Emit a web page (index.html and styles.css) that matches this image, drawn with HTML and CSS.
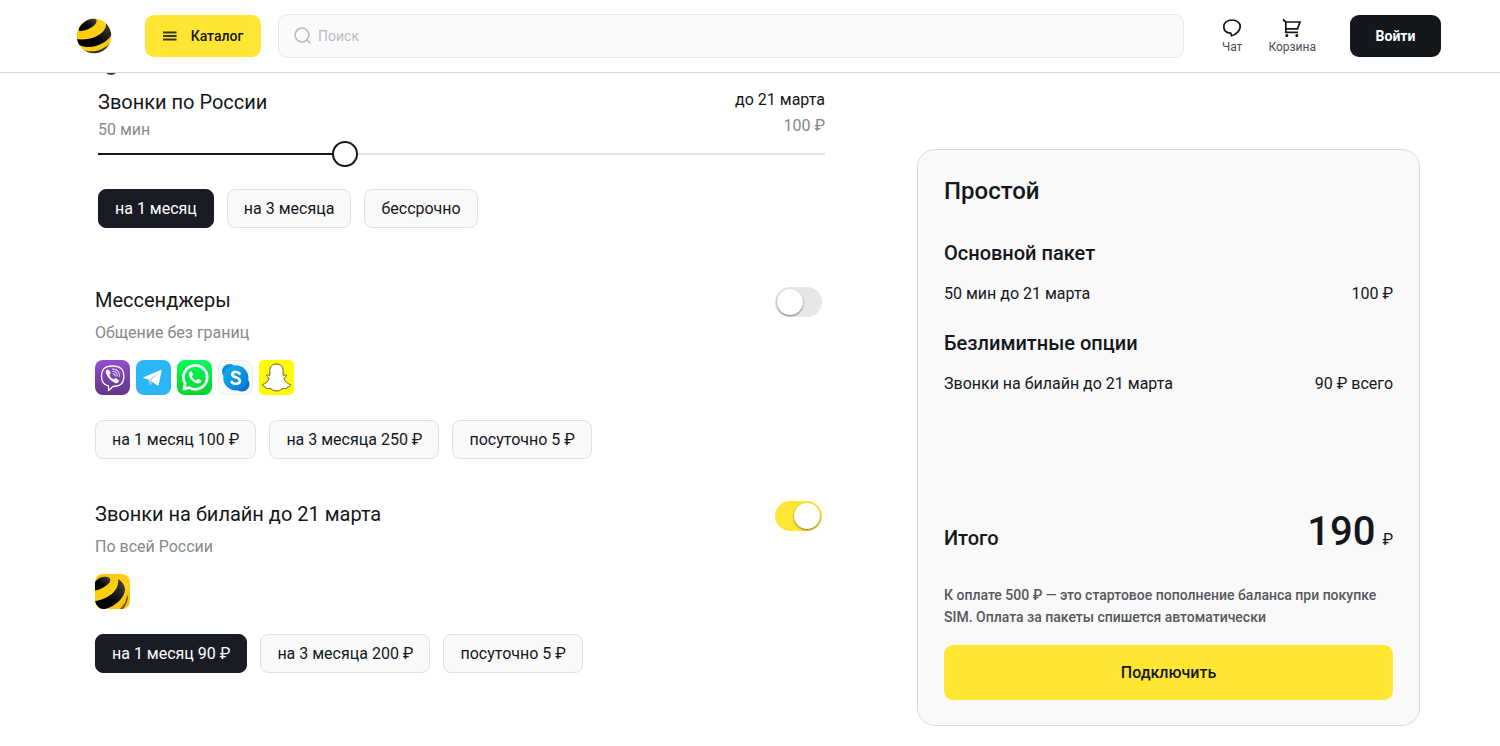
FILE: index.html
```html
<!DOCTYPE html>
<html lang="ru">
<head>
<meta charset="utf-8">
<meta name="viewport" content="width=device-width, initial-scale=1">
<title>Простой</title>
<link rel="stylesheet" href="styles.css">
</head>
<body>
<svg class="defs" width="0" height="0" aria-hidden="true">
  <defs>
    <linearGradient id="gold" x1="0" y1="0" x2="1" y2="1"><stop offset="0" stop-color="#ffc400"/><stop offset="0.6" stop-color="#ffd21a"/><stop offset="1" stop-color="#f5b800"/></linearGradient>
    <linearGradient id="ink" x1="0" y1="1" x2="1" y2="0"><stop offset="0.4" stop-color="#000"/><stop offset="1" stop-color="#4a4a4c"/></linearGradient>
    <linearGradient id="violet" x1="0" y1="0" x2="0" y2="1"><stop offset="0" stop-color="#9150cc"/><stop offset="1" stop-color="#633488"/></linearGradient>
    <linearGradient id="green" x1="0" y1="0" x2="0" y2="1"><stop offset="0" stop-color="#04fb5c"/><stop offset="1" stop-color="#02d52c"/></linearGradient>
    <linearGradient id="azure" x1="0" y1="0" x2="1" y2="1"><stop offset="0" stop-color="#12b4f2"/><stop offset="1" stop-color="#0278d4"/></linearGradient>
    <clipPath id="ball"><circle cx="18" cy="18" r="17.3"/></clipPath>
    <clipPath id="tile"><rect width="35" height="35" rx="8"/></clipPath>
  </defs>
</svg>

<header class="header">
  <a class="logo" href="#" aria-label="билайн">
    <svg width="36" height="36" viewBox="0 0 36 36" aria-hidden="true">
      <g clip-path="url(#ball)">
        <rect width="36" height="36" fill="url(#gold)"/>
        <path d="M3 10C6 5 12 0 18 0C21.500 1 21.500 4.500 18 7.500C14 11 8 13.200 3 13Z" fill="url(#ink)"/>
        <path d="M0 21C10 22.500 20 20 26 14.500C30 10.500 31 7 29 3L36 10V16C32 23.500 22 29 13 29C7 29 2 27 0 24Z" fill="url(#ink)"/>
        <path d="M5 31.500C16 35.500 28 33 36 23V26C31 34 20 38 10 36Z" fill="#39352c"/>
      </g>
    </svg>
  </a>
  <button class="catalog" type="button">
    <svg width="14" height="10" viewBox="0 0 14 10" aria-hidden="true"><path d="M0 1.500H13.500M0 5H13.500M0 8.500H13.500" stroke="#3c3a20" stroke-width="1.900"/></svg>
    Каталог
  </button>
  <label class="search">
    <svg width="18" height="18" viewBox="0 0 18 18" fill="none" stroke="#b9bac6" stroke-width="1.500" aria-hidden="true"><circle cx="8" cy="8" r="6.900"/><path d="M13 13L16.500 16.500"/></svg>
    <input type="search" placeholder="Поиск" aria-label="Поиск">
  </label>
  <nav class="links">
    <a class="link" href="#">
      <svg width="20" height="20" viewBox="0 0 20 20" fill="none" stroke="#14171b" stroke-width="1.700" stroke-linejoin="round" aria-hidden="true"><path d="M8.800 15.200C4.500 15 1.800 12.500 1.800 8.800C1.800 4.800 5 2 10 2C15 2 18.200 4.800 18.200 8.500C18.200 12.500 14.500 16.500 9.500 17.800Z"/></svg>
      Чат
    </a>
    <a class="link" href="#">
      <svg width="20" height="20" viewBox="0 0 20 20" fill="none" stroke="#14171b" stroke-width="1.700" aria-hidden="true"><path d="M1 1.500L3.800 4V14.400H16M3.800 4H18L15.500 10.900H3.800"/><circle cx="4.800" cy="17.500" r="1.500" fill="#14171b" stroke="none"/><circle cx="14.800" cy="17.500" r="1.500" fill="#14171b" stroke="none"/></svg>
      Корзина
    </a>
  </nav>
  <button class="login" type="button">Войти</button>
</header>

<main class="page">
  <div class="options">
    <div class="peek" aria-hidden="true"><span></span></div>

    <section class="calls">
      <div class="row">
        <div>
          <h2 class="title"><label for="minutes">Звонки по России</label></h2>
          <p class="hint">50 мин</p>
        </div>
        <div class="until">
          <p>до 21 марта</p>
          <p class="hint">100 ₽</p>
        </div>
      </div>
      <input class="slider" id="minutes" type="range" min="0" max="150" value="50">
      <div class="chips">
        <button class="chip active" type="button">на 1 месяц</button>
        <button class="chip" type="button">на 3 месяца</button>
        <button class="chip" type="button">бессрочно</button>
      </div>
    </section>

    <section class="option">
      <div class="row">
        <div>
          <h2 class="title"><label for="messengers">Мессенджеры</label></h2>
          <p class="hint">Общение без границ</p>
        </div>
        <input class="toggle" id="messengers" type="checkbox" role="switch">
      </div>
      <div class="apps">
        <svg width="35" height="35" viewBox="0 0 35 35" role="img" aria-label="Viber">
          <rect width="35" height="35" rx="8" fill="url(#violet)"/>
          <path d="M17.500 6C24.500 6 28.800 8.500 28.800 16.500C28.800 24 25 26.500 18 26.500L13.500 30.500V26C8.500 25 6.500 22 6.500 16.500C6.500 8.500 10.500 6 17.500 6Z" fill="none" stroke="#fff" stroke-width="1.300" stroke-linejoin="round"/>
          <path d="M12.500 9.500C10.800 10.300 10.500 11.800 11 13C12.800 18 16 21.500 20.800 23.200C22.500 23.600 23.800 22 24 20.800C24 20.200 21.500 18.300 20.700 18C20 17.900 19.300 19.500 18.500 19.200C16.500 18.500 14.900 16.800 14.400 14.800C14.400 14.200 15.800 13.500 15.600 12.700C15.200 11.500 13.500 9.400 12.500 9.500Z" fill="#fff"/>
          <path d="M17.500 9.200C22 9 24.800 12 24.500 16.500M17.800 11.500C20.800 11.500 22.300 13.500 22.300 16.100M18 13.800C19.500 13.900 20.200 14.800 20.200 15.900" fill="none" stroke="#d9c3ec" stroke-width="1.200" stroke-linecap="round"/>
        </svg>
        <svg width="35" height="35" viewBox="0 0 35 35" role="img" aria-label="Telegram">
          <rect width="35" height="35" rx="8" fill="#29b6f6"/>
          <path d="M7.500 17.200L24.700 10.100C25.300 9.900 25.600 10.300 25.500 10.900L22.800 24.600C22.600 25.500 22 25.700 21.200 25.200L12.500 19.600L8 18.200C7.200 17.900 7 17.500 7.500 17.200Z" fill="#fff"/>
          <path d="M12.500 19.600L22.500 12.900L15 20.600L13.900 25.500Z" fill="#c9d4dc"/><path d="M15 20.600L17.500 22.500L13.900 25.500Z" fill="#a9bdca"/>
        </svg>
        <svg width="35" height="35" viewBox="0 0 35 35" role="img" aria-label="WhatsApp">
          <rect width="35" height="35" rx="8" fill="url(#green)"/>
          <path d="M6.800 29L8.200 23.600A11.900 11.900 0 1 1 12.300 27.600Z" fill="none" stroke="#fff" stroke-width="2.700" stroke-linejoin="round"/>
          <path d="M13.500 11.500C12 12.300 11.400 14 12.100 15.700C13.700 19.600 16.200 22.100 20.500 23.400C22.500 23.800 24.300 22.500 24.400 20.700C24.300 20.100 22 19 21.200 18.700C20.400 18.600 19.900 20.300 19.100 20.200C17.200 19.500 15.700 18.100 14.900 16.400C15 15.800 16.200 15.200 16 14.400C15.600 13 15 11.500 14.500 11.400Z" fill="#fff"/>
        </svg>
        <svg width="35" height="35" viewBox="0 0 35 35" role="img" aria-label="Skype">
          <rect x="0.500" y="0.500" width="34" height="34" rx="8" fill="#f9f9f9" stroke="#eeeeee"/>
          <circle cx="11.500" cy="11.500" r="7.500" fill="#0c8fe0"/><circle cx="24" cy="24" r="7.500" fill="#0570c6"/><circle cx="17.800" cy="17.800" r="12.600" fill="url(#azure)"/>
          <path d="M21.600 13.600C20.800 11.800 14.300 10.800 14.300 14.400C14.300 18 21.800 16.600 21.800 20.700C21.800 25 14.700 24.300 13.800 21.900" fill="none" stroke="#fff" stroke-width="2.700" stroke-linecap="round"/>
        </svg>
        <svg width="35" height="35" viewBox="0 0 35 35" role="img" aria-label="Snapchat">
          <rect width="35" height="35" rx="5" fill="#fffc00"/>
          <path d="M17.500 4C21.600 4 24.100 6.800 24.100 10.500V15.300C25 15.600 26.500 14.400 27.400 15.200C28.400 16.600 25 17.300 25 18.500C25.800 21.500 28.500 23.800 31.300 24.500C32.300 25.500 30.500 26.500 28.500 26.900C28.100 27.400 28.300 28.500 27.500 28.600C25.800 28.700 24.600 28 23 28.900C21 30.200 19.700 31 17.500 31C15.300 31 14 30.200 12 28.900C10.400 28 9.200 28.700 7.500 28.600C6.700 28.500 6.900 27.400 6.500 26.900C4.500 26.500 2.700 25.500 3.700 24.500C6.500 23.800 9.200 21.500 10 18.500C10 17.300 6.600 16.600 7.600 15.200C8.500 14.400 10 15.600 10.900 15.300V10.500C10.900 6.800 13.400 4 17.500 4Z" fill="#fff" stroke="#4a4a3a" stroke-width="0.900"/>
        </svg>
      </div>
      <div class="chips">
        <button class="chip" type="button">на 1 месяц 100 ₽</button>
        <button class="chip" type="button">на 3 месяца 250 ₽</button>
        <button class="chip" type="button">посуточно 5 ₽</button>
      </div>
    </section>

    <section class="option">
      <div class="row">
        <div>
          <h2 class="title"><label for="beeline">Звонки на билайн до 21 марта</label></h2>
          <p class="hint">По всей России</p>
        </div>
        <input class="toggle" id="beeline" type="checkbox" role="switch" checked>
      </div>
      <div class="apps">
        <svg width="35" height="35" viewBox="0 0 35 35" role="img" aria-label="билайн">
          <g clip-path="url(#tile)">
            <rect width="35" height="35" fill="url(#gold)"/>
            <path d="M0 8C4 3 8 2.500 12 3C17 4 16 8 12 11C8 14 4 16 0 16.500Z" fill="url(#ink)"/>
            <path d="M0 27C12 25.500 25 17 23 5C28 8 30 12 30 16C29 24 21 32 10 35H6C3 33 1 31 0 27Z" fill="url(#ink)"/>
            <path d="M25 35C29 31 32 27 32 20L33 24C32 29 30 32 28 35Z" fill="#665019"/>
          </g>
        </svg>
      </div>
      <div class="chips">
        <button class="chip active" type="button">на 1 месяц 90 ₽</button>
        <button class="chip" type="button">на 3 месяца 200 ₽</button>
        <button class="chip" type="button">посуточно 5 ₽</button>
      </div>
    </section>
  </div>

  <aside class="card">
    <h1 class="plan">Простой</h1>
    <h2 class="group">Основной пакет</h2>
    <div class="line"><span>50 мин до 21 марта</span><span>100 ₽</span></div>
    <h2 class="group">Безлимитные опции</h2>
    <div class="line"><span>Звонки на билайн до 21 марта</span><span>90 ₽ всего</span></div>
    <div class="total"><span class="total-label">Итого</span><span class="price"><strong class="sum">190</strong> ₽</span></div>
    <p class="note">К оплате 500 ₽ — это стартовое пополнение баланса при покупке SIM. Оплата за пакеты спишется автоматически</p>
    <button class="connect" type="button">Подключить</button>
  </aside>
</main>
</body>
</html>
```
FILE: styles.css
```css
* { box-sizing: border-box; }

body {
  margin: 0;
  background: #fff;
  color: #14171b;
  font: 16px/24px Roboto, "Liberation Sans", sans-serif;
}

h1, h2, p { margin: 0; font-weight: 400; }
button, input { font: inherit; color: inherit; }
button { border: 0; cursor: pointer; }
svg { display: block; flex: none; }
.defs { position: absolute; }

.header {
  display: flex;
  align-items: center;
  height: 73px;
  padding: 0 59px 0 76px;
  border-bottom: 1px solid #d8d9de;
}
.logo { margin-right: 33px; }
.catalog {
  display: flex;
  align-items: center;
  justify-content: center;
  gap: 14px;
  width: 116px;
  height: 42px;
  margin-right: 17px;
  border-radius: 9px;
  background: #ffe632;
  font-size: 14px;
  font-weight: 500;
}
.search {
  display: flex;
  flex: 1;
  align-items: center;
  gap: 6px;
  height: 44px;
  padding: 0 15px;
  border: 1px solid #e8e8ea;
  border-radius: 9px;
  background: #fafafa;
}
.search input {
  flex: 1;
  min-width: 0;
  padding: 0;
  border: 0;
  outline: 0;
  background: transparent;
  font-size: 14px;
}
.search input::placeholder { color: #b9bac6; }
.links {
  display: flex;
  gap: 26px;
  margin: 0 34px 0 38px;
}
.link {
  display: flex;
  flex-direction: column;
  align-items: center;
  gap: 2px;
  color: #4a4d57;
  font-size: 12px;
  line-height: 14px;
  text-decoration: none;
}
.login {
  width: 91px;
  height: 42px;
  border-radius: 9px;
  background: #14171b;
  color: #fff;
  font-size: 14px;
  font-weight: 700;
}

.page {
  display: grid;
  grid-template-columns: 730fr 503fr;
  align-items: start;
  column-gap: 92px;
  padding: 0 80px 0 95px;
}

.peek {
  display: flex;
  align-items: flex-end;
  height: 2px;
  margin-left: 9px;
  overflow: hidden;
}
.peek span {
  flex: none;
  width: 14px;
  height: 14px;
  border: 2px solid #3a3c40;
  border-radius: 50%;
}

.row {
  display: flex;
  justify-content: space-between;
}
.title {
  font-size: 20px;
  line-height: 28px;
}
.hint { color: #86888c; }
.chips {
  display: flex;
  flex-wrap: wrap;
  gap: 13px;
}
.chip {
  height: 39px;
  padding: 1px 16px 0;
  border: 1px solid #e0e1e5;
  border-radius: 8px;
  background: #f9f9f9;
}
.chip.active {
  border-color: #191c24;
  background: #191c24;
  color: #fff;
}

.calls { padding: 13px 0 0 3px; }
.calls .hint { line-height: 28px; }
.until { text-align: right; }
.slider {
  display: block;
  width: 100%;
  height: 26px;
  margin: -3px 0 22px;
  appearance: none;
  background: linear-gradient(to right, #14171b 33%, #e3e3e3 33%) center / 100% 2px no-repeat;
}
.slider::-webkit-slider-thumb {
  width: 26px;
  height: 26px;
  appearance: none;
  border: 2px solid #14171b;
  border-radius: 50%;
  background: #fff;
}
.slider::-moz-range-thumb {
  width: 22px;
  height: 22px;
  border: 2px solid #14171b;
  border-radius: 50%;
  background: #fff;
}

.option { padding: 0 3px 0 0; }
.calls + .option { margin-top: 58px; }
.option + .option { margin-top: 41px; }
.option .hint { padding-top: 7px; }
.toggle {
  display: flex;
  align-items: center;
  width: 47px;
  height: 30px;
  margin: 1px 0 0;
  padding: 0 2px;
  appearance: none;
  border-radius: 15px;
  background: #e6e7e9;
}
.toggle::before {
  content: "";
  width: 26px;
  height: 26px;
  border-radius: 50%;
  background: #fff;
  box-shadow: 0 1px 2px rgba(0, 0, 0, 0.5);
}
.toggle:checked { justify-content: flex-end; background: #ffe632; }
.apps {
  display: flex;
  gap: 6px;
  padding: 15px 0 25px;
}

.card {
  margin-top: 76px;
  padding: 25px 26px;
  border: 1px solid #dadbdd;
  border-radius: 18px;
  background: #f9f9f9;
}
.plan {
  margin-bottom: 30px;
  font-size: 24px;
  line-height: 32px;
  font-weight: 500;
}
.group {
  font-size: 20px;
  line-height: 32px;
  font-weight: 500;
}
.line {
  display: flex;
  justify-content: space-between;
  margin-bottom: 21px;
  padding-top: 13px;
}
.total {
  display: flex;
  align-items: baseline;
  justify-content: space-between;
  margin: 112px 0 20px;
  line-height: 48px;
}
.total-label { font-size: 20px; font-weight: 500; }
.price {
  display: flex;
  align-items: baseline;
  gap: 7px;
}
.sum { font-size: 40px; font-weight: 500; }
.note {
  margin-bottom: 17px;
  color: #55585c;
  font-size: 14px;
  line-height: 22px;
  font-weight: 500;
}
.connect {
  width: 100%;
  height: 55px;
  border-radius: 9px;
  background: #ffe632;
  font-weight: 500;
}
```
